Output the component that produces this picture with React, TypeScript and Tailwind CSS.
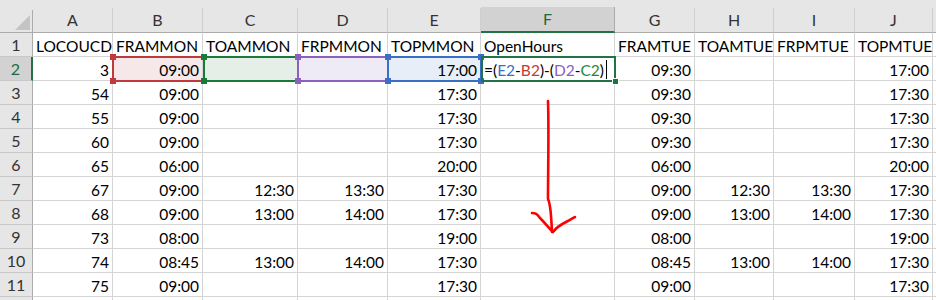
import React from "react";

const COLS = ["A", "B", "C", "D", "E", "F", "G", "H", "I", "J", ""];

const ROWS: string[][] = [
  ["LOCOUCD", "FRAMMON", "TOAMMON", "FRPMMON", "TOPMMON", "OpenHours", "FRAMTUE", "TOAMTUE", "FRPMTUE", "TOPMTUE", ""],
  ["3", "09:00", "", "", "17:00", "", "09:30", "", "", "17:00", ""],
  ["54", "09:00", "", "", "17:30", "", "09:30", "", "", "17:30", ""],
  ["55", "09:00", "", "", "17:30", "", "09:30", "", "", "17:30", ""],
  ["60", "09:00", "", "", "17:30", "", "09:30", "", "", "17:30", ""],
  ["65", "06:00", "", "", "20:00", "", "06:00", "", "", "20:00", ""],
  ["67", "09:00", "12:30", "13:30", "17:30", "", "09:00", "12:30", "13:30", "17:30", ""],
  ["68", "09:00", "13:00", "14:00", "17:30", "", "09:00", "13:00", "14:00", "17:30", ""],
  ["73", "08:00", "", "", "19:00", "", "08:00", "", "", "19:00", ""],
  ["74", "08:45", "13:00", "14:00", "17:30", "", "08:45", "13:00", "14:00", "17:30", ""],
  ["75", "09:00", "", "", "17:30", "", "09:00", "", "", "17:30", ""],
  ["", "", "", "", "", "", "", "", "", "", ""],
];

// fills for the referenced cells in row 2
const ROW2_FILL: Record<number, string> = {
  1: "bg-[#f6e8e8]",
  2: "bg-[#e6efe7]",
  3: "bg-[#efebf6]",
  4: "bg-[#e7eef8]",
};

function RefBox({ left, width, color }: { left: number; width: number; color: string }) {
  const sq = "absolute w-[6px] h-[6px]";
  return (
    <div className="absolute top-[56px] h-[26px] border-2" style={{ left, width, borderColor: color }}>
      <span className={`${sq} -left-[4px] -top-[4px]`} style={{ background: color }} />
      <span className={`${sq} -right-[4px] -top-[4px]`} style={{ background: color }} />
      <span className={`${sq} -left-[4px] -bottom-[4px]`} style={{ background: color }} />
      <span className={`${sq} -right-[4px] -bottom-[4px]`} style={{ background: color }} />
    </div>
  );
}

export default function App() {
  return (
    <div className="relative w-[936px] h-[300px] overflow-hidden bg-white font-['Lato','Liberation_Sans',sans-serif] text-[15.5px] text-black">
      <div className="grid grid-cols-[33px_80px_90px_95px_90px_93px_134px_80px_79px_81px_78px_1fr]">
        {/* corner */}
        <div className="relative h-[33px] bg-[#e6e6e6]">
          <div className="absolute left-0 top-[10px] bottom-0 right-0 border-r border-b border-[#ababab]" />
          <svg className="absolute left-[14px] top-[14px]" width="17" height="17" viewBox="0 0 17 17">
            <polygon points="1,16 16,1 16,16" fill="#c4c4c4" />
          </svg>
        </div>
        {COLS.map((c, i) => (
          <div key={c + i} className="flex flex-col h-[33px] bg-[#e6e6e6]">
            <div className="h-[10px]" />
            <div
              className={`flex-1 flex items-center justify-center border-r text-[16px] ${
                c === "F"
                  ? "bg-[#d2d2d2] text-[#1d6b3c] border-b-2 border-b-[#217346] border-r-[#ababab]"
                  : "text-[#333] border-b border-b-[#ababab] border-r-[#cfcfcf]"
              }`}
            >
              {c}
            </div>
          </div>
        ))}

        {ROWS.map((row, r) => (
          <React.Fragment key={r}>
            <div
              className={`h-[24px] flex items-center justify-center border-b border-b-[#c8c8c8] text-[16px] ${
                r === 1
                  ? "bg-[#d2d2d2] text-[#1d6b3c] border-r-2 border-r-[#217346]"
                  : "bg-[#e6e6e6] text-[#333] border-r border-r-[#ababab]"
              }`}
            >
              {r < 11 ? r + 1 : ""}
            </div>
            {row.map((v, c) => (
              <div
                key={c}
                className={`h-[24px] flex items-end px-[3px] leading-[20px] whitespace-nowrap overflow-visible border-r border-b border-[#d4d4d4] ${
                  r === 0 ? "justify-start" : "justify-end"
                } ${r === 1 ? ROW2_FILL[c] ?? "" : ""}`}
              >
                {r === 1 && c === 5 ? (
                  <span className="flex items-end w-full justify-start">
                    <span>=(</span>
                    <span className="text-[#3a6fc6]">E2</span>
                    <span>-</span>
                    <span className="text-[#c23b3d]">B2</span>
                    <span>)-(</span>
                    <span className="text-[#8c60c0]">D2</span>
                    <span>-</span>
                    <span className="text-[#1e8a3f]">C2</span>
                    <span>)</span>
                    <span className="ml-[2px] mb-[1px] w-[1px] h-[19px] bg-black" />
                  </span>
                ) : (
                  v
                )}
              </div>
            ))}
          </React.Fragment>
        ))}
      </div>

      {/* formula reference boxes */}
      <RefBox left={112} width={93} color="#c0393d" />
      <RefBox left={203} width={96} color="#1a7a3a" />
      <RefBox left={297} width={92} color="#8c60c0" />
      <RefBox left={387} width={95} color="#3a6fc6" />

      {/* active cell */}
      <div className="absolute left-[481px] top-[56px] w-[135px] h-[26px] border-2 border-[#217346]">
        <span className="absolute -right-[5px] -bottom-[5px] w-[7px] h-[7px] bg-[#217346] border border-white" />
      </div>

      {/* hand-drawn arrow */}
      <svg className="absolute left-0 top-0 pointer-events-none" width="936" height="300" viewBox="0 0 936 300">
        <path
          d="M548 101 C549 130 548 170 548 199 C551 205 551 215 552 232"
          fill="none"
          stroke="#ff0000"
          strokeWidth="2.6"
          strokeLinecap="round"
        />
        <path
          d="M532 213 C536 213 537 214 540 218 C545 223 549 228 553 232 C556 228 560 225 566 222 C570 220 573 218 575 217"
          fill="none"
          stroke="#ff0000"
          strokeWidth="2.6"
          strokeLinecap="round"
          strokeLinejoin="round"
        />
      </svg>
    </div>
  );
}
